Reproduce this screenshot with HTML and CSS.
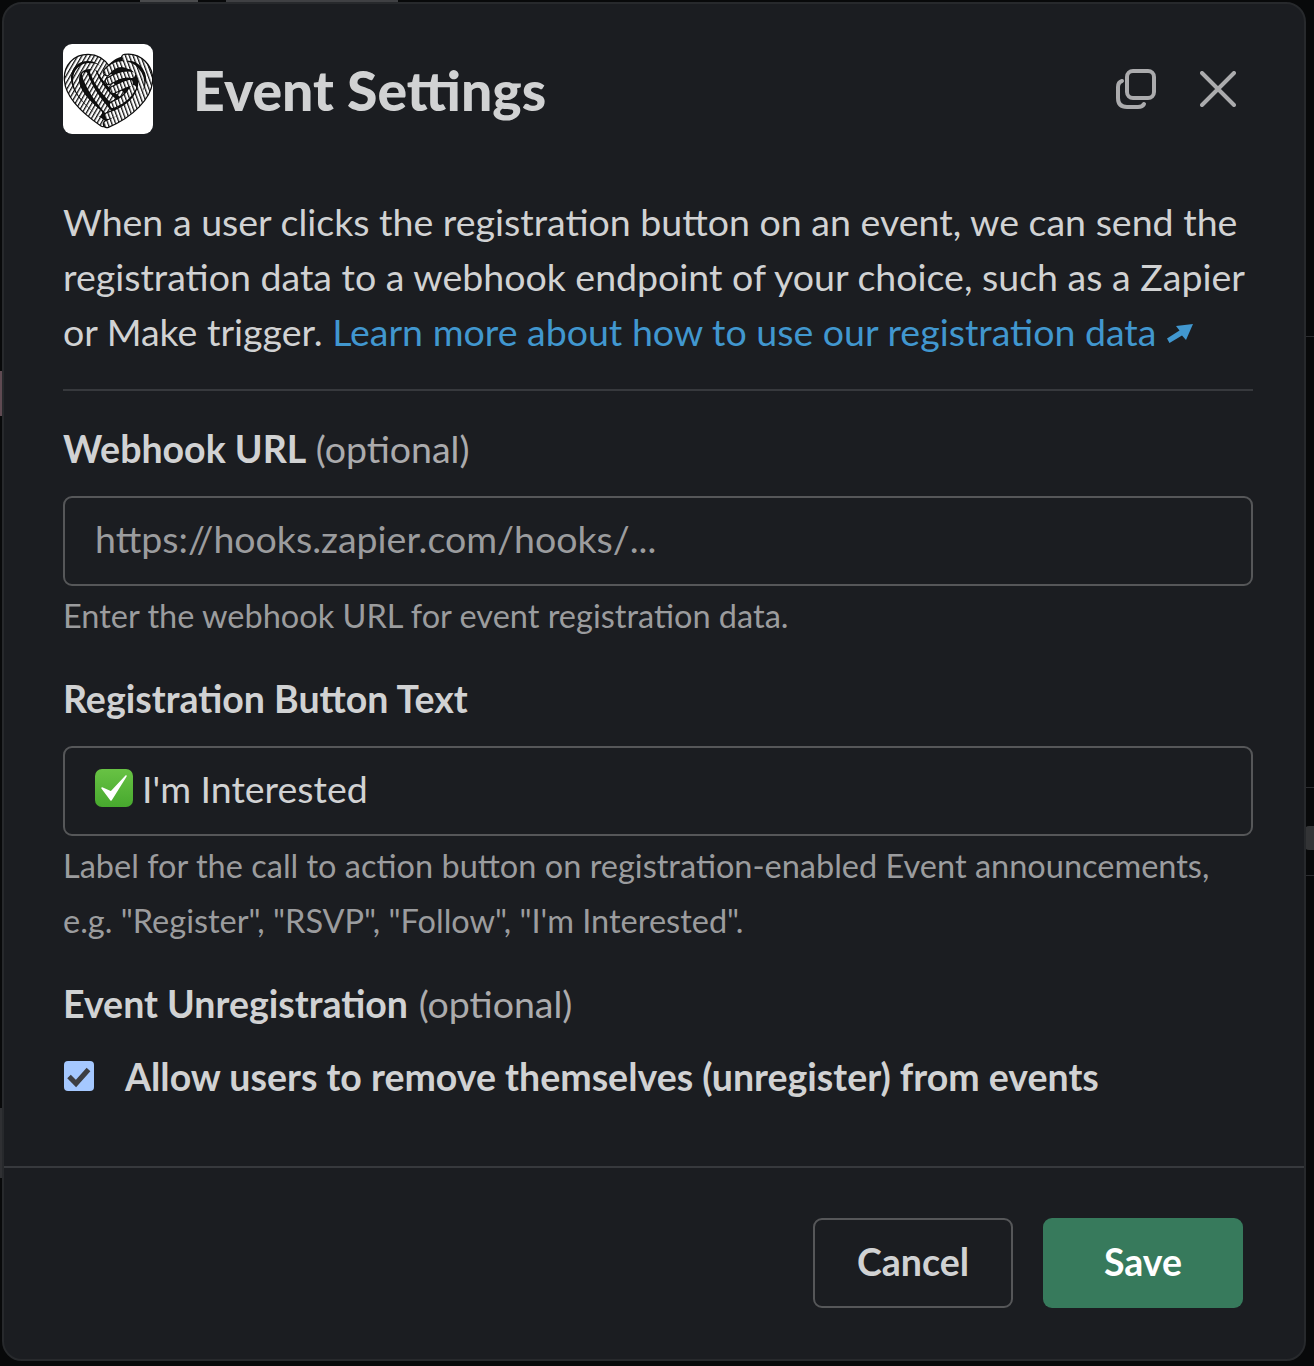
FILE: index.html
```html
<!DOCTYPE html>
<html lang="en">
<head>
  <meta charset="UTF-8" />
  <title>Event Settings</title>
  <link rel="stylesheet" href="styles.css">
</head>
<body>
  <div class="backdrop">
    <span class="bg-mark mark-pink"></span>
    <span class="bg-mark mark-gray"></span>
    <span class="bg-mark top-a"></span>
    <span class="bg-mark top-b"></span>
    <span class="bg-mark line-a"></span>
    <span class="bg-mark line-b"></span>
    <span class="bg-mark line-c"></span>
    <span class="bg-mark glyph"></span>
    <div class="modal">
      <header class="modal-head">
        <div class="logo">
          <svg viewBox="0 0 90 90" width="90" height="90" aria-hidden="true">
            <defs>
              <pattern id="twistL" width="3.600" height="3.600" patternUnits="userSpaceOnUse" patternTransform="rotate(30)">
                <rect width="3.600" height="3.600" fill="#fff"/>
                <rect width="1.300" height="3.600" fill="#111"/>
              </pattern>
              <pattern id="twistR" width="3.600" height="3.600" patternUnits="userSpaceOnUse" patternTransform="rotate(-20)">
                <rect width="3.600" height="3.600" fill="#fff"/>
                <rect width="1.300" height="3.600" fill="#111"/>
              </pattern>
            </defs>
            <path fill="#111" d="M44 24C36 9 14 8 5 21C-3 34 3 50 15 62C25 72 35 79 43 84C54 79 66 71 76 62C89 50 93 33 84 20C74 8 52 9 44 24Z"/>
            <!-- left strands -->
            <g fill="none" stroke-linecap="round">
              <g stroke="#0d0d0d" stroke-width="8.500">
                <path d="M40 79C24 68 6 52 5 36C4 23 13 14 25 14C34 14 40 19 44 25"/>
                <path d="M36 69C23 58 13 46 13 36C13 27 19 22 27 22C35 22 42 27 48 34"/>
                <path d="M22 31C26 44 36 58 48 71"/>
                <path d="M30 28C34 39 44 52 56 62"/>
                <path d="M38 28C42 35 48 42 58 50"/>
              </g>
              <g stroke="url(#twistL)" stroke-width="6">
                <path d="M40 79C24 68 6 52 5 36C4 23 13 14 25 14C34 14 40 19 44 25"/>
                <path d="M36 69C23 58 13 46 13 36C13 27 19 22 27 22C35 22 42 27 48 34"/>
                <path d="M22 31C26 44 36 58 48 71"/>
                <path d="M30 28C34 39 44 52 56 62"/>
                <path d="M38 28C42 35 48 42 58 50"/>
              </g>
              <!-- right strands, laid over the left ones -->
              <g stroke="#0d0d0d" stroke-width="8.500">
                <path d="M62 14C76 12 87 24 86 37C85 52 68 70 44 80"/>
                <path d="M45 72C58 68 72 60 77 46C81 35 75 23 62 20"/>
                <path d="M50 61C58 58 66 52 70 44"/>
                <path d="M44 28C50 21 58 18 66 22"/>
                <path d="M46 37C54 32 62 29 69 31"/>
                <path d="M50 46C56 43 62 40 67 39"/>
              </g>
              <g stroke="url(#twistR)" stroke-width="6">
                <path d="M62 14C76 12 87 24 86 37C85 52 68 70 44 80"/>
                <path d="M45 72C58 68 72 60 77 46C81 35 75 23 62 20"/>
                <path d="M50 61C58 58 66 52 70 44"/>
                <path d="M44 28C50 21 58 18 66 22"/>
                <path d="M46 37C54 32 62 29 69 31"/>
                <path d="M50 46C56 43 62 40 67 39"/>
              </g>
            </g>
          </svg>
        </div>
        <h1>Event Settings</h1>
        <button class="icon-btn copy-btn" aria-label="Open in new window">
          <svg viewBox="0 0 40 40" width="40" height="40"><rect x="11" y="2" width="27" height="27" rx="6"/><path d="M6 12C3 13 2 15 2 18V29C2 35 5 38 11 38H22C25 38 27 37 28 35"/></svg>
        </button>
        <button class="icon-btn close-btn" aria-label="Close">
          <svg viewBox="0 0 36 36" width="36" height="36"><path d="M2 2L34 34M34 2L2 34"/></svg>
        </button>
      </header>

      <div class="modal-body">
        <p class="intro">When a user clicks the registration button on an event, we can send the registration data to a webhook endpoint of your choice, such as a Zapier or Make trigger. <a href="#">Learn more about how to use our registration data<svg class="ext-arrow" viewBox="0 0 26 20" width="26" height="20"><path d="M0 14.500L2.500 19L15 11.500L19 16L26 0L9 2L12.500 6.500Z"/></svg></a></p>
        <hr class="rule" />

        <div class="field webhook">
          <label for="webhook">Webhook URL <span class="opt">(optional)</span></label>
          <input id="webhook" type="text" placeholder="https://hooks.zapier.com/hooks/..." />
          <p class="hint">Enter the webhook URL for event registration data.</p>
        </div>

        <div class="field button-text">
          <label for="btnText">Registration Button Text</label>
          <div class="fake-input" id="btnText">
            <svg viewBox="0 0 38 38" width="38" height="38" aria-hidden="true">
              <defs><linearGradient id="tick" x1="0" y1="0" x2="0" y2="1"><stop offset="0" stop-color="#68c244"/><stop offset="1" stop-color="#47a92e"/></linearGradient></defs>
              <rect width="38" height="38" rx="7" fill="url(#tick)"/>
              <path d="M7 19L16 31L31 7L16 23Z" fill="#fff" stroke="#fff" stroke-width="1.500" stroke-linejoin="round"/>
            </svg>
            <span>I'm Interested</span>
          </div>
          <p class="hint">Label for the call to action button on registration-enabled Event announcements, e.g. "Register", "RSVP", "Follow", "I'm Interested".</p>
        </div>

        <div class="field unreg">
          <div class="label">Event Unregistration <span class="opt">(optional)</span></div>
          <label class="check-row">
            <span class="check"><svg viewBox="0 0 30 30" width="30" height="30"><path d="M5 15.500L12 22.500L24.500 8.500" /></svg></span>
            Allow users to remove themselves (unregister) from events
          </label>
        </div>
      </div>

      <footer class="modal-foot">
        <button class="btn cancel">Cancel</button>
        <button class="btn save">Save</button>
      </footer>
    </div>
  </div>
</body>
</html>
```

FILE: styles.css
```css
* {
  box-sizing: border-box;
}
html, body {
  margin: 0;
  height: 100%;
}
body {
  background: #08090a;
  font-family: Lato, "Noto Sans", sans-serif;
  color: #d1d2d3;
  overflow: hidden;
}
.backdrop {
  position: relative;
  height: 1366px;
  padding: 2px 8px 5px 2px;
}
/* bits of the page behind the dialog */
.bg-mark {
  position: absolute;
  background: #2a2b2e;
}
.mark-pink {
  left: 0;
  top: 371px;
  width: 3px;
  height: 45px;
  background: #5f4a52;
}
.mark-gray {
  left: 0;
  top: 1108px;
  width: 3px;
  height: 70px;
  background: #2f3033;
}
.top-a {
  left: 140px;
  top: 0;
  width: 58px;
  height: 2px;
  background: #4a4b4d;
}
.top-b {
  left: 226px;
  top: 0;
  width: 172px;
  height: 2px;
  background: #3f4043;
}
.line-a {
  left: 1306px;
  top: 336px;
  width: 8px;
  height: 1px;
}
.line-b {
  left: 1306px;
  top: 787px;
  width: 8px;
  height: 1px;
}
.line-c {
  left: 1306px;
  top: 875px;
  width: 8px;
  height: 1px;
}
.glyph {
  left: 1305px;
  top: 826px;
  width: 9px;
  height: 24px;
  background: #333436;
  border-radius: 4px 0 0 4px;
}
.modal {
  position: relative;
  height: 100%;
  display: flex;
  flex-direction: column;
  background: #1b1d21;
  border: 2px solid #27292c;
  border-radius: 20px;
}
.modal-head {
  display: flex;
  align-items: center;
  padding: 40px 68px 0 59px;
  height: 130px;
}
.logo {
  width: 90px;
  height: 90px;
  background: #fff;
  border-radius: 9px;
  flex: none;
  overflow: hidden;
}
.logo svg {
  display: block;
}
h1 {
  margin: 0 0 0 40px;
  flex: 1;
  font-size: 55.300px;
  font-weight: 900;
  color: #d1d2d3;
}
.icon-btn {
  background: none;
  border: none;
  padding: 0;
  display: flex;
}
.icon-btn svg {
  fill: none;
  stroke: #ababad;
  stroke-width: 4;
  stroke-linecap: round;
}
.copy-btn {
  margin-right: 44px;
}
.modal-body {
  flex: 1;
  padding: 0 51px 0 59px;
}
.intro {
  margin: 60px 0 0;
  font-size: 37.500px;
  line-height: 55px;
}
.intro a {
  color: #4197cf;
  text-decoration: none;
}
.ext-arrow {
  margin-left: 11px;
  fill: #4197cf;
  vertical-align: 2px;
}
.rule {
  border: none;
  height: 2px;
  background: #37393d;
  margin: 30px 0 0;
}
.field label, .field .label {
  display: block;
  font-size: 37.500px;
  font-weight: 700;
  line-height: 50px;
}
.opt {
  margin-left: 1.500px;
  font-weight: 400;
  color: #ababad;
}
.webhook {
  margin-top: 33px;
}
.webhook input, .fake-input {
  display: flex;
  align-items: center;
  width: 100%;
  height: 90px;
  margin-top: 22px;
  padding: 0 30px 6px;
  background: none;
  border: 2px solid #565759;
  border-radius: 9px;
  font: 400 37.500px Lato, "Noto Sans", sans-serif;
  color: #d1d2d3;
}
.webhook input::placeholder {
  color: #9b9c9e;
  opacity: 1;
}
.fake-input svg {
  flex: none;
  margin: 0 9px 0 0;
}
.hint {
  margin: 2px 0 0;
  font-size: 32.500px;
  line-height: 55px;
  color: #9b9c9e;
}
.button-text {
  margin-top: 31px;
}
.unreg {
  margin-top: 31px;
}
.check-row {
  display: flex !important;
  align-items: center;
  margin-top: 23px;
}
.check {
  width: 30px;
  height: 30px;
  margin: -2px 31px 0 1px;
  flex: none;
  background: #a5c8ff;
  border-radius: 4px;
}
.check svg {
  display: block;
  fill: none;
  stroke: #3d3e42;
  stroke-width: 5;
}
.modal-foot {
  display: flex;
  justify-content: flex-end;
  gap: 30px;
  border-top: 2px solid #37393d;
  padding: 50px 61px 51px 0;
}
.btn {
  width: 200px;
  height: 90px;
  padding: 0 0 3px;
  border-radius: 9px;
  font: 700 37.500px Lato, "Noto Sans", sans-serif;
}
.cancel {
  background: none;
  border: 2px solid #565759;
  color: #d1d2d3;
}
.save {
  background: #377a5c;
  border: none;
  color: #fff;
}
```
